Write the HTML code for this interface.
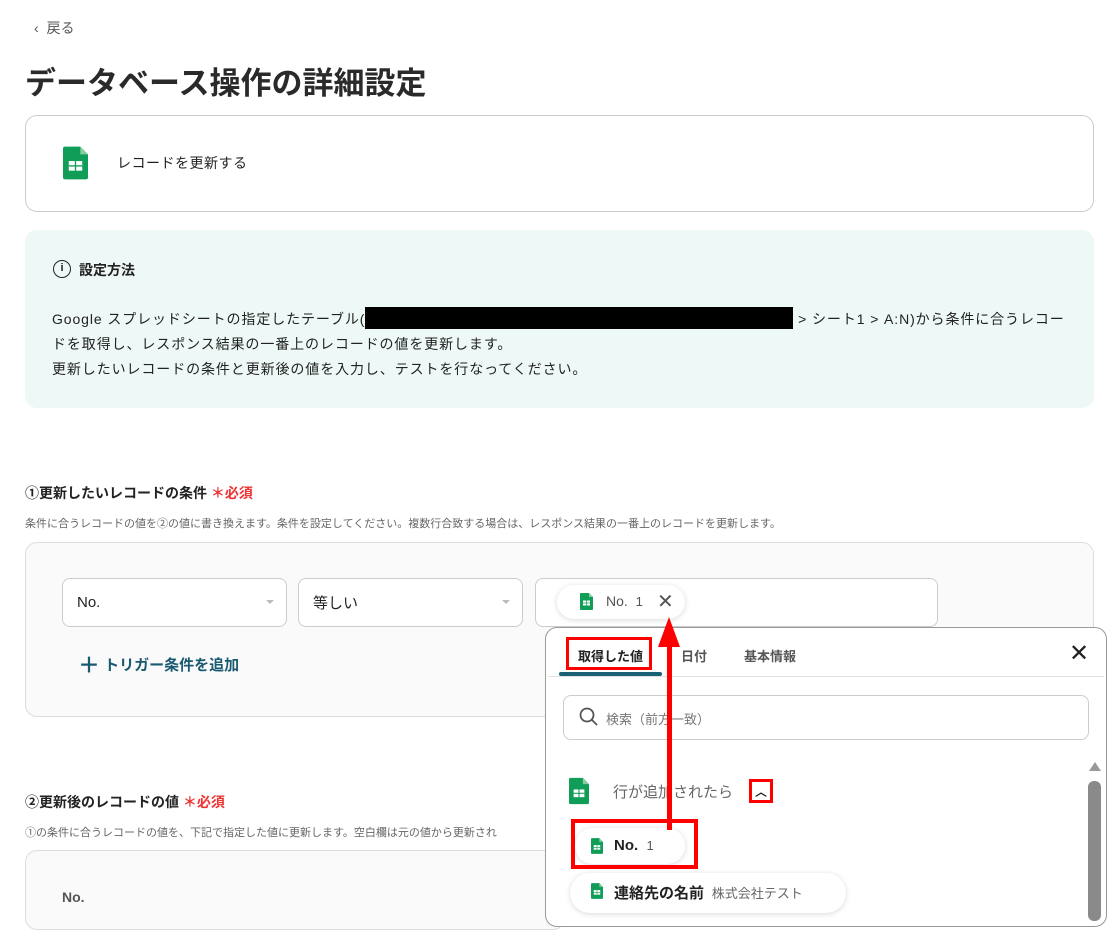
<!DOCTYPE html>
<html><head><meta charset="utf-8"><style>
*{box-sizing:border-box;margin:0;padding:0}
body{width:1119px;height:912px;overflow:hidden;background:#fff;font-family:"Liberation Sans","Noto Sans CJK JP",sans-serif;color:#222;position:relative}
.a{position:absolute}
.sel{position:absolute;border:1px solid #ccc;border-radius:8px;background:#fff;font-size:15px;padding:0 14px;display:flex;align-items:center}
.sel .c{position:absolute;right:12px;top:21px;width:0;height:0;border-left:4px solid transparent;border-right:4px solid transparent;border-top:4px solid #bbb}
.pill{position:absolute;background:#fff;border-radius:20px;box-shadow:0 1px 6px rgba(0,0,0,.15);display:flex;align-items:center}
</style></head><body>
<svg width="0" height="0" style="position:absolute"><defs><symbol id="sh" viewBox="0 0 26 34"><path d="M2 0H18L26 8V32a2 2 0 0 1-2 2H2a2 2 0 0 1-2-2V2a2 2 0 0 1 2-2z" fill="#0f9d58"/><path d="M18 0L26 8H18z" fill="#87ce9f"/><rect x="6" y="15" width="14" height="10" fill="#fff"/><rect x="12.3" y="15" width="1.4" height="10" fill="#0f9d58"/><rect x="6" y="19.3" width="14" height="1.4" fill="#0f9d58"/></symbol></defs></svg>

<div class="a" style="left:34px;top:18px;font-size:14px;color:#555">‹&nbsp; 戻る</div>
<div class="a" style="left:25px;top:58px;font-size:31px;font-weight:bold;color:#2a2a2a">データベース操作の詳細設定</div>

<div class="a" style="left:25px;top:115px;width:1069px;height:97px;border:1px solid #ccc;border-radius:12px"></div>
<svg class="a" style="left:63px;top:146px" width="25" height="34"><use href="#sh"/></svg>
<div class="a" style="left:117px;top:153px;font-size:14px;letter-spacing:0.5px">レコードを更新する</div>

<div class="a" style="left:25px;top:230px;width:1069px;height:178px;background:#eef8f6;border-radius:12px"></div>
<div class="a" style="left:53px;top:260px;width:18px;height:18px;border:1.6px solid #222;border-radius:50%;font-size:11px;text-align:center;line-height:15px;font-weight:bold">i</div>
<div class="a" style="left:79px;top:260px;font-size:14px;font-weight:bold">設定方法</div>
<div class="a" style="left:52px;top:307px;font-size:14px;line-height:25px;width:1025px;letter-spacing:0.9px">Google スプレッドシートの指定したテーブル(<span style="display:inline-block;width:428px;height:22px;background:#000;vertical-align:-5px"></span> &gt; シート1 &gt; A:N)から条件に合うレコードを取得し、レスポンス結果の一番上のレコードの値を更新します。<br>更新したいレコードの条件と更新後の値を入力し、テストを行なってください。</div>

<div class="a" style="left:25px;top:483px;font-size:14px;font-weight:bold">①更新したいレコードの条件 <span style="color:#e33">＊必須</span></div>
<div class="a" style="left:25px;top:515px;font-size:11px;color:#666">条件に合うレコードの値を②の値に書き換えます。条件を設定してください。複数行合致する場合は、レスポンス結果の一番上のレコードを更新します。</div>
<div class="a" style="left:25px;top:542px;width:1069px;height:175px;background:#fafafa;border:1px solid #ddd;border-radius:12px"></div>
<div class="sel" style="left:62px;top:578px;width:225px;height:49px">No.<span class="c"></span></div>
<div class="sel" style="left:298px;top:578px;width:225px;height:49px">等しい<span class="c"></span></div>
<div class="sel" style="left:535px;top:578px;width:403px;height:49px"></div>
<div class="pill" style="left:557px;top:585px;width:128px;height:34px"></div>
<svg class="a" style="left:580px;top:593px" width="13" height="17"><use href="#sh"/></svg>
<div class="a" style="left:606px;top:593px;font-size:14px;color:#555">No.&nbsp; <span style="font-size:13px">1</span></div>
<div class="a" style="left:657px;top:589px;font-size:20px;color:#555">✕</div>
<div class="a" style="left:78px;top:648px;font-size:15px;font-weight:bold;color:#1a5a70"><span style="font-size:22px;vertical-align:-3px">＋</span>&nbsp;トリガー条件を追加</div>

<div class="a" style="left:25px;top:792px;font-size:14px;font-weight:bold">②更新後のレコードの値 <span style="color:#e33">＊必須</span></div>
<div class="a" style="left:25px;top:824px;font-size:11px;color:#666">①の条件に合うレコードの値を、下記で指定した値に更新します。空白欄は元の値から更新され</div>
<div class="a" style="left:25px;top:850px;width:540px;height:80px;background:#fafafa;border:1px solid #ddd;border-radius:12px"></div>
<div class="a" style="left:62px;top:889px;font-size:14px;font-weight:bold;color:#555">No.</div>

<div class="a" style="left:545px;top:627px;width:562px;height:300px;background:#fff;border:1px solid #999;border-radius:12px"></div>
<div class="a" style="left:548px;top:676px;width:556px;height:1px;background:#e2e2e2"></div>
<div class="a" style="left:559px;top:672px;width:103px;height:4px;background:#1a6075;border-radius:2px"></div>
<div class="a" style="left:578px;top:646px;font-size:13px;font-weight:bold">取得した値</div>
<div class="a" style="left:566px;top:637px;width:86px;height:33px;border:3px solid #f00"></div>
<div class="a" style="left:681px;top:646px;font-size:13px;color:#555;font-weight:bold">日付</div>
<div class="a" style="left:744px;top:646px;font-size:13px;color:#555;font-weight:bold">基本情報</div>
<div class="a" style="left:1069px;top:640px;font-size:24px;line-height:28px">✕</div>
<div class="a" style="left:563px;top:695px;width:526px;height:45px;border:1px solid #ccc;border-radius:8px"></div>
<svg class="a" style="left:579px;top:707px" width="20" height="20"><circle cx="8" cy="8" r="6.5" fill="none" stroke="#555" stroke-width="1.8"/><path d="M13 13l5 5" stroke="#555" stroke-width="1.8"/></svg>
<div class="a" style="left:606px;top:709px;font-size:13px;color:#777">検索（前方一致）</div>
<svg class="a" style="left:569px;top:777px" width="20" height="28"><use href="#sh"/></svg>
<div class="a" style="left:613px;top:781px;font-size:15px;color:#666">行が追加されたら</div>
<div class="a" style="left:749px;top:779px;width:24px;height:24px;border:3px solid #f00;font-size:12px;text-align:center;line-height:20px;font-weight:bold">︿</div>
<div class="pill" style="left:575px;top:828px;width:110px;height:36px"></div>
<svg class="a" style="left:591px;top:838px" width="12" height="16"><use href="#sh"/></svg>
<div class="a" style="left:614px;top:837px;font-size:15px;font-weight:bold">No.&nbsp; <span style="font-weight:normal;font-size:13px;color:#555">1</span></div>
<div class="a" style="left:571px;top:819px;width:127px;height:50px;border:4px solid #f00"></div>
<div class="pill" style="left:570px;top:873px;width:276px;height:40px"></div>
<svg class="a" style="left:591px;top:883px" width="12" height="16"><use href="#sh"/></svg>
<div class="a" style="left:614px;top:882px;font-size:15px;font-weight:bold">連絡先の名前 <span style="font-weight:normal;font-size:13px;color:#666">&nbsp;株式会社テスト</span></div>
<div class="a" style="left:1089px;top:762px;width:0;height:0;border-left:6px solid transparent;border-right:6px solid transparent;border-bottom:9px solid #999"></div>
<div class="a" style="left:1088px;top:781px;width:13px;height:140px;background:#8a8a8a;border-radius:6px"></div>

<div class="a" style="left:667px;top:645px;width:5px;height:185px;background:#f00"></div>
<div class="a" style="left:658px;top:617px;width:0;height:0;border-left:11px solid transparent;border-right:11px solid transparent;border-bottom:30px solid #f00"></div>
</body></html>
